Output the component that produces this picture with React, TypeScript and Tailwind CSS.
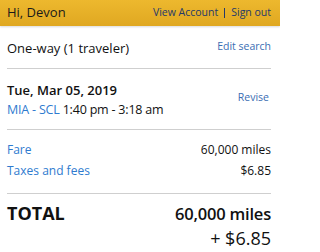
export default function App() {
  return (
    <div className="w-[280px] h-[252px] bg-white overflow-hidden text-[#111]" style={{ fontFamily: '"Open Sans", sans-serif' }}>
      <header className="h-[26px] flex items-center justify-between pl-[7px] pr-[9px] bg-gradient-to-b from-[#edb82e] to-[#e0a821] shadow-[0_1px_2px_rgba(0,0,0,0.15)]">
        <span className="text-[13px] text-[#1a1a1a]">Hi, Devon</span>
        <div className="flex items-center text-[10.5px] text-[#24396b]">
          <a href="#">View Account</a>
          <span className="mx-[6px] w-px h-[10px] bg-[#24396b]" />
          <a href="#">Sign out</a>
        </div>
      </header>

      <div className="pl-[7px] pr-[9px]">
        <div className="flex items-center justify-between pt-[13px] pb-[10px]">
          <span className="text-[13px] leading-[18px]">One-way (1 traveler)</span>
          <a href="#" className="text-[10.5px] text-[#3a6db3] mb-[3px]">Edit search</a>
        </div>

        <div className="border-t border-[#cfcfcf] flex justify-between pt-[12px] pb-[10px]">
          <div>
            <div className="text-[13px] leading-[19px] font-semibold">Tue, Mar 05, 2019</div>
            <div className="text-[12.5px] leading-[19px] tracking-[-0.2px]">
              <span className="text-[#2f7bcf]">MIA - SCL</span> 1:40 pm - 3:18 am
            </div>
          </div>
          <a href="#" className="text-[10.5px] text-[#3a6db3] mt-[9px] mr-[2px]">Revise</a>
        </div>

        <div className="border-t border-[#cfcfcf] pt-[9px] pb-[12px] text-[12px] leading-[21px]">
          <div className="flex justify-between">
            <span className="text-[#2f7bcf]">Fare</span>
            <span>60,000 miles</span>
          </div>
          <div className="flex justify-between">
            <span className="text-[#2f7bcf]">Taxes and fees</span>
            <span>$6.85</span>
          </div>
        </div>

        <div className="border-t border-[#cfcfcf] pt-[7px] flex justify-between">
          <span className="text-[18px] leading-[25px] font-bold">TOTAL</span>
          <div className="text-right leading-[25px]">
            <div className="text-[16.5px] font-semibold tracking-[-0.2px]">60,000 miles</div>
            <div className="text-[18px] font-medium">+ $6.85</div>
          </div>
        </div>
      </div>
    </div>
  );
}
